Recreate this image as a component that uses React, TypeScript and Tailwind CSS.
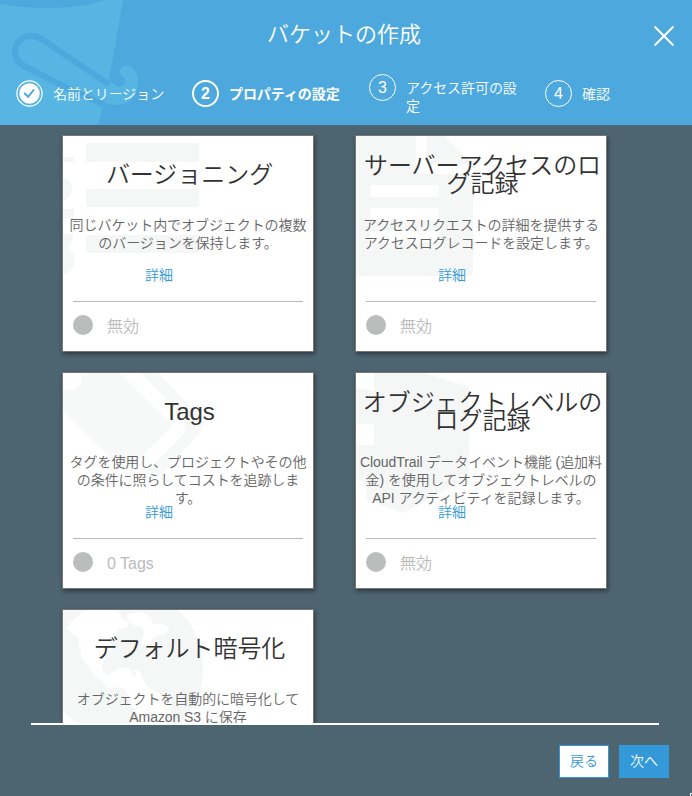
import type { ReactNode } from 'react';

const jp = 'font-["Liberation_Sans","Noto_Sans_CJK_JP",sans-serif]';

function Bucket() {
  return (
    <svg className="absolute left-0 top-0" width="145" height="125" viewBox="0 0 145 125">
      <path d="M0 4Q20 8 50 8Q88 7 104 0H123L109 80L118 87Q125 86 125 80Q125 77 121 75C118 70 122 65.500 127 65.500C134 66 138 74 138 83C137 96 130 105 117 105Q110 105 104 103L102 108Q101 118 97 125H0Z" fill="#57b5e4" />
      <path d="M109 84.500L43 40C31 31 15 38 15 52C15 59 19 63 25 66.500L67 88Q88 97 104 105" fill="none" stroke="#4da9dd" strokeWidth="6.2" />
    </svg>
  );
}

function Step({ n, lines, active, done, className }: { n: number; lines: string[]; active?: boolean; done?: boolean; className: string }) {
  return (
    <div className={`flex items-start text-white ${className}`}>
      {done ? (
        <svg width="27" height="27" viewBox="0 0 27 27" className="shrink-0">
          <circle cx="13.5" cy="13.5" r="12.6" fill="none" stroke="#fff" strokeWidth="1.2" />
          <circle cx="13.5" cy="13.5" r="10.2" fill="#fff" />
          <path d="M8.800 13.500L12.200 16.800L17.600 10" fill="none" stroke="#4da9dd" strokeWidth="2" strokeLinecap="round" />
        </svg>
      ) : (
        <span className={`flex h-[27px] w-[27px] shrink-0 items-center justify-center rounded-full border-white pt-px text-base leading-none ${active ? 'border-2 font-bold' : 'border'}`}>{n}</span>
      )}
      <div className={`ml-[10px] mt-[5px] whitespace-nowrap text-[14px] leading-[18px] tracking-[-0.07px] ${active ? 'font-bold' : 'font-[350]'}`}>
        {lines.map((l) => <div key={l}>{l}</div>)}
      </div>
    </div>
  );
}

function Card({ title, desc, status, art }: { title: string[]; desc: string[]; status?: string; art: ReactNode }) {
  return (
    <div className="relative h-[217px] w-[252px] border border-[#777] bg-white shadow-[1px_2px_4px_rgba(0,0,0,0.45)]">
      <svg className="absolute left-0 top-0" width="250" height="215" viewBox="0 0 250 215" fill="#f5f7f7">{art}</svg>
      <div className="relative flex flex-col font-[350]">
        <h2 className="flex h-[76px] flex-col items-center justify-center whitespace-nowrap pl-[3px] pt-px text-[24px] leading-[18px] tracking-[-0.05px] text-[#333]">
          {title.map((l) => <span key={l}>{l}</span>)}
        </h2>
        <div className="mt-1 flex h-[50px] flex-col items-center whitespace-nowrap text-[14px] leading-[18px] tracking-[-0.07px] text-[#666]">
          {desc.map((l) => <span className="shrink-0" key={l}>{l}</span>)}
        </div>
        {status && (
          <>
            <a className="ml-[82px] w-7 text-[14px] leading-[18px] text-[#3399d8]">詳細</a>
            <div className="mx-[10px] mt-[17px] border-t border-[#b9bbbb]" />
            <div className="mt-[13px] flex h-5 items-center px-[10px]">
              <span className="h-5 w-5 rounded-full bg-[#bbbdbd]" />
              <span className="ml-[14px] pt-[3px] text-base leading-5 text-[#bbb]">{status}</span>
            </div>
          </>
        )}
      </div>
    </div>
  );
}

const versionArt = (
  <>
    <rect x="23" y="7" width="113.500" height="19" rx="2" />
    <rect x="23" y="53" width="113.500" height="18" rx="2" />
    <rect x="23" y="99" width="113.500" height="18" rx="2" />
    <path d="M0 21H11V26H0ZM0 43C13 42 11 62 0 65ZM0 73H11V83H0ZM0 98H10V103L5 113C16 117 12 139 0 138Z" />
  </>
);

const logArt = (
  <>
    <path d="M0 0H60V34Q60 38 64 38H117V134Q117 140 111 140H0ZM71 0H88L117 28H71Z" />
    <g fill="#fff">
      <rect x="14" y="49" width="69" height="12" rx="3" />
      <rect x="14" y="72" width="69" height="12" rx="3" />
      <rect x="14" y="95" width="69" height="12" rx="3" />
    </g>
  </>
);

const tagArt = (
  <g fill="#f7f9f8">
    <path d="M18 0H56L105 48Q110 53 105 58L68 95Q63 99 58 95L0 38V15C8 21 18 15 18 7Z" />
    <path d="M82 0H95L137 43Q144 51 137 60L94 105L84 97L119 63Q126 53 119 43L78 0Z" />
  </g>
);

const trailArt = <path d="M18 0H69L113 14V104L47 140L11 127L9 109L0 107V72H18V51H0V15L18 18Z" />;

const globeArt = (
  <>
    <path d="M0 0H115C133 16 140 38 140 60C140 82 130 100 116 114H9L0 105Z" />
    <path
      fill="#fff"
      d="M4 18L9 11L14 8L19 2L25 0H53L57 3L59 9L66 13L64 18L57 19L52 25L47 31L51 37L46 43L42 49L39 55L40 61L45 65L49 63L53 59L61 57L68 60L70 66L73 66L72 59L77 62L81 71L86 78L97 84L106 87L110 92L107 103L100 114H77L75 104L69 97L67 88L62 79L54 77L46 79L38 71L32 67L25 56L18 48L18 41L15 35L16 29L11 25ZM63 5L75 2L83 4L89 9L90 14L99 14L106 18L103 24L93 26L87 32L82 38L78 33L81 24L79 17L72 16L66 11Z"
    />
    <path d="M0 102L9 109L14 114H0Z" fill="#fff" />
  </>
);

export default function App() {
  return (
    <div className={`relative flex h-[796px] w-[692px] flex-col overflow-hidden bg-[#4d6471] ${jp}`} lang="ja">
      <header className="relative h-[125px] shrink-0 bg-[#4da9dd]">
        <Bucket />
        <div className="relative flex h-full flex-col">
          <div className="flex h-[74px] items-start">
            <h1 className="ml-[267px] mt-[20px] whitespace-nowrap text-[22px] font-[350] leading-[30px] text-white">バケットの作成</h1>
            <svg className="ml-auto mr-[17px] mt-[25px]" width="22" height="22" viewBox="0 0 22 22" stroke="#fff" strokeWidth="2"><path d="M1.500 1.500L20.500 20.500M20.500 1.500L1.500 20.500" /></svg>
          </div>
          <div className="flex">
            <Step n={1} lines={['名前とリージョン']} done className="ml-4 mt-[6px] w-[176px]" />
            <Step n={2} lines={['プロパティの設定']} active className="mt-[6px] w-[177px]" />
            <Step n={3} lines={['アクセス許可の設', '定']} className="w-[176px]" />
            <Step n={4} lines={['確認']} className="mt-[6px]" />
          </div>
        </div>
      </header>
      <main className="h-[598px] shrink-0 overflow-hidden">
        <div className="ml-[62px] mt-[10px] grid w-[545px] grid-cols-[252px_252px] gap-x-[41px] gap-y-5">
          <Card title={['バージョニング']} desc={['同じバケット内でオブジェクトの複数', 'のバージョンを保持します。']} status="無効" art={versionArt} />
          <Card title={['サーバーアクセスのロ', 'グ記録']} desc={['アクセスリクエストの詳細を提供する', 'アクセスログレコードを設定します。']} status="無効" art={logArt} />
          <Card title={['Tags']} desc={['タグを使用し、プロジェクトやその他', 'の条件に照らしてコストを追跡しま', 'す。']} status="0 Tags" art={tagArt} />
          <Card title={['オブジェクトレベルの', 'ログ記録']} desc={['CloudTrail データイベント機能 (追加料', '金) を使用してオブジェクトレベルの', 'API アクティビティを記録します。']} status="無効" art={trailArt} />
          <Card title={['デフォルト暗号化']} desc={['オブジェクトを自動的に暗号化して', 'Amazon S3 に保存']} art={globeArt} />
        </div>
      </main>
      <footer className="mx-[31px] w-[628px] border-t-2 border-white">
        <div className="mt-5 flex gap-[10px] pl-[528px] text-[14px] font-[350]">
          <button className="h-[33px] w-[50px] shrink-0 border border-[#3399d8] bg-white text-[#3399d8]">戻る</button>
          <button className="h-[33px] w-[50px] shrink-0 bg-[#3399d8] text-white">次へ</button>
        </div>
      </footer>
      <span className="absolute bottom-0 right-0 h-[3px] w-[2px] border-l border-t border-white" />
    </div>
  );
}
